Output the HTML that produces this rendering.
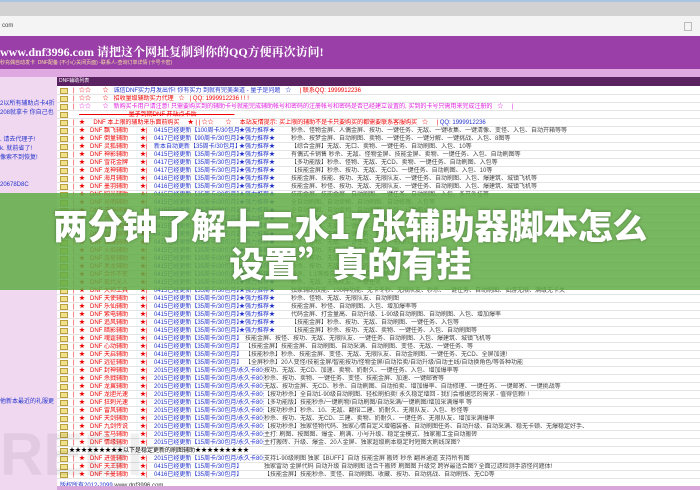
<!DOCTYPE html>
<html><head><meta charset="utf-8"><style>
*{margin:0;padding:0;box-sizing:border-box}
body{width:700px;height:490px;overflow:hidden;background:#fff;font-family:"Liberation Sans","Noto Sans CJK SC",sans-serif;position:relative}
.a{position:absolute}
.r{position:absolute;left:57px;width:643px;height:8px;border-bottom:1px solid #e4e4e4;font-size:6px;line-height:8px;white-space:nowrap;overflow:hidden}
.r span{position:absolute;top:0}
.f{left:3px;top:1px!important;width:8px;height:6px;background:#f0e08a;border:1px solid #b8a040}
.p{left:16px;color:#e00}.s{left:22px;color:#e00}.n{left:33px;color:#e00}.m{left:83px;color:#e00}.b{left:97px;color:#2233cc}.q{left:182px;color:#2233cc;background:#fff}.g{left:234px;color:#444;background:#fff}
</style></head><body>
<div class="a" style="left:0;top:0;width:700px;height:2px;background:#a8c4e0"></div>
<div class="a" style="left:0;top:2px;width:700px;height:14px;background:#d2d2d2"></div>
<div class="a" style="left:0;top:16px;width:700px;height:20px;background:#f4f4f4;font-size:6px;color:#444;line-height:20px;padding-left:2px">com</div>
<div class="a" style="left:684px;top:22px;width:8px;height:9px;border:1px solid #bbb"></div>
<div class="a" style="left:0;top:36px;width:700px;height:33px;background:#9a3ea8"></div>
<div class="a" style="left:0;top:43px;font:bold 12px 'Liberation Serif','Noto Serif CJK SC',serif;color:#fff;white-space:nowrap">www.dnf3996.com 请把这个网址复制到你的QQ方便再次访问!</div>
<div class="a" style="left:0;top:59px;font-size:5px;color:#f4e0a0;white-space:nowrap">秒充偶自动发卡 &nbsp;DNF配备 (不小心关闭页面) -联系人-查询订单详情 (卡号卡密)</div>
<div class="a" style="left:0;top:69px;width:700px;height:8px;background:#e0a8e0"></div>
<div class="a" style="left:0;top:77px;width:57px;height:413px;background:#f1d8f1"></div>
<div class="a" style="left:57px;top:77px;width:643px;height:9px;background:#5a2260;color:#fff;font-size:5px;line-height:9px;padding-left:2px">DNF辅助列表</div>
<div class="a" style="left:0;top:100px;font-size:6px;color:#2233cc;line-height:9px">2以所有辅助点卡4折<br>208就拿卡 你自己也<br><br><br>. 请去代理子!<br>k. 就前省了!<br>像索不到恢复!<br><br><br>20678D8C</div>
<div class="a" style="left:0;top:396px;font-size:6px;color:#2233cc">他新本最近的礼服更</div>

<div class="r" style="top:87px"><span class="f"></span><span class="p">|</span><span class="s" style="color:#e00">☆☆ &nbsp; &nbsp; &nbsp; ☆ &nbsp; <span style="position:static;color:#2233cc">诚信DNF实力月发出作! 你有实力 到就有完美渠道 - 量子是问题 &nbsp; ☆ &nbsp; &nbsp;</span> <span style="position:static;color:#e00">| 联系QQ: 1999912236</span></span></div>
<div class="r" style="top:95px"><span class="f"></span><span class="p">|</span><span class="s" style="color:#e00">☆☆ &nbsp; &nbsp; &nbsp; ☆ &nbsp; 招收量级辅助实力代理 &nbsp; ☆ &nbsp; | QQ: 1999912236 ! ! !</span></div>
<div class="r" style="top:103px"><span class="f"></span><span class="p">|</span><span class="s" style="color:#e020e0">☆☆ &nbsp; &nbsp; &nbsp; ☆ &nbsp; 新购买卡用户请注意! 只需要购买到的辅助卡号就能完成辅助帐号和密码的注册帐号和密码是否已经建立设置的, 买到的卡号只需用来完成注册的 &nbsp; ☆ &nbsp; &nbsp; |</span></div>
<div class="r" style="top:111px"><span class="f"></span><span class="s" style="color:#e00;text-decoration:line-through">———————— 量子到期DNF 开站点卡后 ——————</span></div>
<div class="r" style="top:119px"><span class="f"></span><span class="p">|</span><span class="s">★ &nbsp; &nbsp; DNF 本上限的辅助来乐面前购买 &nbsp; &nbsp; ★ | | ☆☆ &nbsp; &nbsp; &nbsp; ☆ &nbsp; &nbsp; 本站友情提示: 买上限的辅助不是卡只要购买的都需要联系客服购买 &nbsp; ☆ &nbsp; &nbsp; | <span style="position:static;color:#2233cc">QQ: 1999912236</span></span></div>

<div class="r" style="top:127px"><span class="f"></span><span class="p">|</span><span class="s">★</span><span class="n">DNF 飘飞辅助</span><span class="m">★|</span><span class="b">0415已经更新【100周卡/30包月】</span><span class="q">★强力推荐★</span><span class="g">秒杀、怪物金屏、人偶金屏、按功、一键任务、无敌、一键收集、一键清像、变怪、入包、自动开箱等等</span></div>
<div class="r" style="top:135px"><span class="f"></span><span class="p">|</span><span class="s">★</span><span class="n">DNF 倒量辅助</span><span class="m">★|</span><span class="b">0417已经更新【90周卡/30包月】</span><span class="q">★强力推荐★</span><span class="g">秒杀、按梦金屏、自动刷图、卖物、一键任务、一键分解、一键挑战、入包、8图等</span></div>
<div class="r" style="top:143px"><span class="f"></span><span class="p">|</span><span class="s">★</span><span class="n">DNF 灵狐辅助</span><span class="m">★|</span><span class="b">新本自动更新【35周卡/30包月】</span><span class="q">★强力推荐★</span><span class="g">【综合金屏】无敌、无口、卖物、一键任务、自动刷图、入包、10等</span></div>
<div class="r" style="top:151px"><span class="f"></span><span class="p">|</span><span class="s">★</span><span class="n">DNF 神影辅助</span><span class="m">★|</span><span class="b">0415已经更新【35周卡/30包月】</span><span class="q">★强力推荐★</span><span class="g">有偶式卡销售 秒杀、无敌、怪物金屏、技能金屏、卖物、一键任务、入包、自动刷图等</span></div>
<div class="r" style="top:159px"><span class="f"></span><span class="p">|</span><span class="s">★</span><span class="n">DNF 雪花金牌</span><span class="m">★|</span><span class="b">0417已经更新【35周卡/30包月】</span><span class="q">★强力推荐★</span><span class="g">【多功能版】秒杀、怪物、无敌、无CD、卖物、一键任务、自动刷图、入包等</span></div>
<div class="r" style="top:167px"><span class="f"></span><span class="p">|</span><span class="s">★</span><span class="n">DNF 龙神辅助</span><span class="m">★|</span><span class="b">0417已经更新【35周卡/30包月】</span><span class="q">★强力推荐★</span><span class="g">【技能金屏】秒杀、按功、无敌、无CD、一键任务、自动刷图、入包、10等</span></div>
<div class="r" style="top:175px"><span class="f"></span><span class="p">|</span><span class="s">★</span><span class="n">DNF 海月辅助</span><span class="m">★|</span><span class="b">0416已经更新【35周卡/30包月】</span><span class="q">★强力推荐★</span><span class="g">技能金屏、技能、按功、无敌、无限队友、一键任务、自动刷图、入包、爆建筑、城镇飞机等</span></div>
<div class="r" style="top:183px"><span class="f"></span><span class="p">|</span><span class="s">★</span><span class="n">DNF 墨羽辅助</span><span class="m">★|</span><span class="b">0416已经更新【35周卡/30包月】</span><span class="q">★强力推荐★</span><span class="g">技能金屏、秒怪、按功、无敌、无限队友、一键任务、自动刷图、入包、爆建筑、城镇飞机等</span></div>
<div class="r" style="top:191px"><span class="f"></span><span class="p">|</span><span class="s">★</span><span class="n">DNF 阳光辅助</span><span class="m">★|</span><span class="b">0415已经更新【35周卡/30包月】</span><span class="q">★强力推荐★</span><span class="g">技能金屏、技能金屏、自动刷图、一键任务、自动刷图、入包、多开外挂等</span></div>
<div class="r" style="top:199px"><span class="f"></span><span class="p">|</span><span class="s">★</span><span class="n">DNF 光明辅助</span><span class="m">★|</span><span class="b">0415已经更新【35周卡/30包月】</span><span class="q">★强力推荐★</span><span class="g">全自动刷图、自动卖物、自动刷图、自动修理、入包等</span></div>
<div class="r" style="top:207px"><span class="f"></span><span class="p">|</span><span class="s">★</span><span class="n">DNF 天神辅助</span><span class="m">★|</span><span class="b">0415已经更新【35周卡/30包月】</span><span class="q">★强力推荐★</span><span class="g">全自动刷图、自动卖物、自动刷图、入包、17种职业</span></div>
<div class="r" style="top:215px"><span class="f"></span><span class="p">|</span><span class="s">★</span><span class="n">DNF 神剑辅助</span><span class="m">★|</span><span class="b">0415已经更新【35周卡/30包月】</span><span class="q">★强力推荐★</span><span class="g">秒杀、按功、无敌、一键任务、自动刷图</span></div>
<div class="r" style="top:223px"><span class="f"></span><span class="p">|</span><span class="s">★</span><span class="n">DNF 金鹰辅助</span><span class="m">★|</span><span class="b">0415已经更新【35周卡/30包月】</span><span class="q">★强力推荐★</span><span class="g">秒杀、按功、无敌、一键任务、自动刷图</span></div>
<div class="r" style="top:231px"><span class="f"></span><span class="p">|</span><span class="s">★</span><span class="n">DNF 银狐辅助</span><span class="m">★|</span><span class="b">0415已经更新【35周卡/30包月】</span><span class="q">★强力推荐★</span><span class="g">秒杀、按功、无敌、一键任务、自动刷图</span></div>
<div class="r" style="top:239px"><span class="f"></span><span class="p">|</span><span class="s">★</span><span class="n">DNF 云端辅助</span><span class="m">★|</span><span class="b">0415已经更新【35周卡/30包月】</span><span class="q">★强力推荐★</span><span class="g">秒杀、怪物、无敌、一键任务、卖物、无限队友等</span></div>
<div class="r" style="top:247px"><span class="f"></span><span class="p">|</span><span class="s">★</span><span class="n">DNF 火焰辅助</span><span class="m">★|</span><span class="b">0415已经更新【35周卡/30包月】</span><span class="q">★强力推荐★</span><span class="g">秒杀、按功、无敌、一键任务、自动刷图</span></div>
<div class="r" style="top:255px"><span class="f"></span><span class="p">|</span><span class="s">★</span><span class="n">DNF 流星辅助</span><span class="m">★|</span><span class="b">0415已经更新【35周卡/30包月】</span><span class="q">★强力推荐★</span><span class="g">秒杀、按功、无敌、一键任务、自动刷图</span></div>
<div class="r" style="top:263px"><span class="f"></span><span class="p">|</span><span class="s">★</span><span class="n">DNF 黑龙辅助</span><span class="m">★|</span><span class="b">0415已经更新【35周卡/30包月】</span><span class="q">★强力推荐★</span><span class="g">秒杀、按功、无敌、一键任务、自动刷图</span></div>
<div class="r" style="top:271px"><span class="f"></span><span class="p">|</span><span class="s">★</span><span class="n">DNF 合作不死</span><span class="m">★|</span><span class="b">0415已经更新【35周卡/30包月】</span><span class="q">★强力推荐★</span><span class="g">秒杀、1:1等级自动、无敌、自动刷图</span></div>
<div class="r" style="top:279px"><span class="f"></span><span class="p">|</span><span class="s">★</span><span class="n">DNF 现代光人</span><span class="m">★|</span><span class="b">0415已经更新【35周卡/30包月】</span><span class="q">★强力推荐★</span><span class="g">秒杀、无敌、无限队友、一键任务</span></div>
<div class="r" style="top:287px"><span class="f"></span><span class="p">|</span><span class="s">★</span><span class="n">DNF 大师工具</span><span class="m">★|</span><span class="b">0415已经更新【35周卡/30包月】</span><span class="q">★强力推荐★</span><span class="g">独家辅助技能、100种功能、无卡冬秒、无限队友、秒杀、一键任务、自动刷图、仙游无限、满级无卡关</span></div>
<div class="r" style="top:295px"><span class="f"></span><span class="p">|</span><span class="s">★</span><span class="n">DNF 天使辅助</span><span class="m">★|</span><span class="b">0415已经更新【35周卡/30包月】</span><span class="q">★强力推荐★</span><span class="g">秒杀、怪物、无敌、无限队友、自动刷图</span></div>
<div class="r" style="top:303px"><span class="f"></span><span class="p">|</span><span class="s">★</span><span class="n">DNF 乐仙辅助</span><span class="m">★|</span><span class="b">0415已经更新【35周卡/30包月】</span><span class="q">★强力推荐★</span><span class="g">技能金屏、秒怪、自动刷图、入包、增加爆率等</span></div>
<div class="r" style="top:311px"><span class="f"></span><span class="p">|</span><span class="s">★</span><span class="n">DNF 紫电辅助</span><span class="m">★|</span><span class="b">0415已经更新【35周卡/30包月】</span><span class="q">★强力推荐★</span><span class="g">代码金屏、打金量高、自动升级、1-90级自动刷图、自动刷图、入包、增加爆率</span></div>
<div class="r" style="top:319px"><span class="f"></span><span class="p">|</span><span class="s">★</span><span class="n">DNF 追风辅助</span><span class="m">★|</span><span class="b">0415已经更新【35周卡/30包月】</span><span class="q">★强力推荐★</span><span class="g">【技能金屏】秒杀、按功、无敌、自动刷图、一键任务、入包等</span></div>
<div class="r" style="top:327px"><span class="f"></span><span class="p">|</span><span class="s">★</span><span class="n">DNF 暗影辅助</span><span class="m">★|</span><span class="b">0415已经更新【35周卡/30包月】</span><span class="q">★强力推荐★</span><span class="g">【技能金屏】秒杀、按功、无敌、卖物、一键任务、入包、自动刷图等</span></div>
<div class="r" style="top:335px"><span class="f"></span><span class="p">|</span><span class="s">★</span><span class="n">DNF 魂霆辅助</span><span class="m">★|</span><span class="b">0415已经更新【35周卡/30包月】</span><span class="g" style="left:188px">技能金屏、按怪、按功、无敌、无限队友、一键任务、自动刷图、入包、爆建筑、城镇飞机等</span></div>
<div class="r" style="top:343px"><span class="f"></span><span class="p">|</span><span class="s">★</span><span class="n">DNF 心动辅助</span><span class="m">★|</span><span class="b">0415已经更新【35周卡/30包月】</span><span class="g" style="left:188px">【技能金屏】技能金屏、自动刷图、自动采满、自动刷图、变怪、无敌、一键任务、等</span></div>
<div class="r" style="top:351px"><span class="f"></span><span class="p">|</span><span class="s">★</span><span class="n">DNF 天启辅助</span><span class="m">★|</span><span class="b">0416已经更新【35周卡/30包月】</span><span class="g" style="left:188px">【技能秒杀】秒杀、技能金屏、变怪、无敌、无限队友、自动金刷图、一键任务、无CD、全屏加速!</span></div>
<div class="r" style="top:359px"><span class="f"></span><span class="p">|</span><span class="s">★</span><span class="n">DNF 远征辅助</span><span class="m">★|</span><span class="b">0415已经更新【35周卡/30包月】</span><span class="g" style="left:188px">【全屏秒杀】20人变怪/技能金屏/智能按功/怪物金屏/自动拾卖/自动升级/自动主线/自动换角色/等各种功能</span></div>
<div class="r" style="top:367px"><span class="f"></span><span class="p">|</span><span class="s">★</span><span class="n">DNF 封神辅助</span><span class="m">★|</span><span class="b">2015已经更新【15周卡/30包月/永久卡80元】</span><span class="g" style="left:207px">按功、无敌、无CD、加速、卖物、奶耐久、一键任务、入包、增加爆率等</span></div>
<div class="r" style="top:375px"><span class="f"></span><span class="p">|</span><span class="s">★</span><span class="n">DNF 杀戮辅助</span><span class="m">★|</span><span class="b">2015已经更新【15周卡/30包月/永久卡80元】</span><span class="g" style="left:207px">秒杀、按功、卖物、一键任务、变怪、技能金屏、加速、一键邮寄等</span></div>
<div class="r" style="top:383px"><span class="f"></span><span class="p">|</span><span class="s">★</span><span class="n">DNF 龙翼辅助</span><span class="m">★|</span><span class="b">2015已经更新【15周卡/30包月/永久卡80元】</span><span class="g" style="left:207px">无敌、按功金屏、无CD、秒杀、自动刷图、自动拍卖、增加爆率、自动修理、一键任务、一键邮寄、一键挑战等</span></div>
<div class="r" style="top:391px"><span class="f"></span><span class="p">|</span><span class="s">★</span><span class="n">DNF 龙胆光速</span><span class="m">★|</span><span class="b">2015已经更新【15周卡/30包月/永久卡80元】</span><span class="g" style="left:207px">【按功秒杀】全自动1-90级自动刷图、轻松刷拍卖! 永久稳定增回 - 我们会根据您的需求 - 值得信赖! !</span></div>
<div class="r" style="top:399px"><span class="f"></span><span class="p">|</span><span class="s">★</span><span class="n">DNF 狂刺光速</span><span class="m">★|</span><span class="b">2015已经更新【15周卡/30包月/永久卡80元】</span><span class="g" style="left:207px">【多功能版】技能秒杀/一键刷物/自动刷图/自动采满/一键刷图/增加采满爆率 等</span></div>
<div class="r" style="top:407px"><span class="f"></span><span class="p">|</span><span class="s">★</span><span class="n">DNF 雷风辅助</span><span class="m">★|</span><span class="b">2015已经更新【15周卡/30包月/永久卡80元】</span><span class="g" style="left:207px">【按功秒杀】秒杀、10、无敌、翻倍二建、奶耐久、无限队友、入包、秒怪等</span></div>
<div class="r" style="top:415px"><span class="f"></span><span class="p">|</span><span class="s">★</span><span class="n">DNF 天剑辅助</span><span class="m">★|</span><span class="b">2015已经更新【15周卡/30包月/永久卡80元】</span><span class="g" style="left:207px">秒杀、按功、无敌、无CD、三建、卖物、奶耐久、一键任务、无限队友、增加采满爆率</span></div>
<div class="r" style="top:423px"><span class="f"></span><span class="p">|</span><span class="s">★</span><span class="n">DNF 九剑传说</span><span class="m">★|</span><span class="b">2015已经更新【15周卡/30包月/永久卡80元】</span><span class="g" style="left:207px">【按功秒杀】独家怪物代码、独家心情自定义增幅装备、自动刷图任务、自动升级、自动采满、稳无卡顿、无爆稳定好手、</span></div>
<div class="r" style="top:431px"><span class="f"></span><span class="p">|</span><span class="s">★</span><span class="n">DNF 宝马辅助</span><span class="m">★|</span><span class="b">2015已经更新【15周卡/30包月/永久卡80元】</span><span class="g" style="left:207px">主打: 刷图、按图图、爆金、刷满、小号升级、稳定金模式、独家搬工金自动搬砖</span></div>
<div class="r" style="top:439px"><span class="f"></span><span class="p">|</span><span class="s">★</span><span class="n">DNF 情缘辅助</span><span class="m">★|</span><span class="b">2015已经更新【15周卡/30包月/永久卡80元】</span><span class="g" style="left:207px">主打搬砖、升级、爆金、20人金屏、独家超级刷本稳定时短图大刷线深图?</span></div>
<div class="r" style="top:447px"><span class="f"></span><span class="s" style="left:12px;color:#000">★★★★★★★★★以下是稳定更新的刷图辅助★★★★★★★★★</span></div>
<div class="r" style="top:455px"><span class="f"></span><span class="p">|</span><span class="s">★</span><span class="n">DNF 进盛辅助</span><span class="m">★|</span><span class="b">2015已经更新【15周卡/30包月/永久卡80元】</span><span class="g" style="left:207px">支持1-90级刷图 独家【BUFF】自动 技能金屏 搬砖 秒杀 翻界通道 支持所有图</span></div>
<div class="r" style="top:463px"><span class="f"></span><span class="p">|</span><span class="s">★</span><span class="n">DNF 天王辅助</span><span class="m">★|</span><span class="b">0415已经更新【15周卡/30包月】</span><span class="g" style="left:207px">独家雷动 金屏代码 自动升级 自动刷图 适合千搬砖 刷图图 升级党 跨界最适合图? 全面过滤检测手游怪问题体!</span></div>
<div class="r" style="top:471px"><span class="f"></span><span class="p">|</span><span class="s">★</span><span class="n">DNF 卡曼辅助</span><span class="m">★|</span><span class="b">0416已经更新【35周卡/30包月】</span><span class="g" style="left:207px">【技能金屏】技能秒杀、变怪、自动刷图、收藏、按功、自动挑战、自动刷钱、无CD等</span></div>
<div class="a" style="left:60px;top:480px;font-size:6px;color:#2233cc;white-space:nowrap">版权所有2012-2099 <span style="color:#333">www.dnf3996.com</span></div>
<div class="a" style="left:57px;top:486px;width:643px;height:4px;background:#d9a6dc"></div>

<div class="a" style="left:0;top:193px;width:700px;height:97px;background:rgba(98,172,70,0.86)"></div>
<div class="a" style="left:0;top:206px;width:700px;text-align:center;font:900 35px/38px 'Noto Sans CJK SC',sans-serif;color:#fff;text-shadow:0 0 3px rgba(0,0,0,.35);letter-spacing:-0.5px;white-space:nowrap">两分钟了解十三水17张辅助器脚本怎么<br>设置”真的有挂</div>
<div class="a" style="left:0;top:420px;font:bold 60px 'Liberation Sans',sans-serif;color:rgba(0,0,0,0.06)">REDI</div>
</body></html>
